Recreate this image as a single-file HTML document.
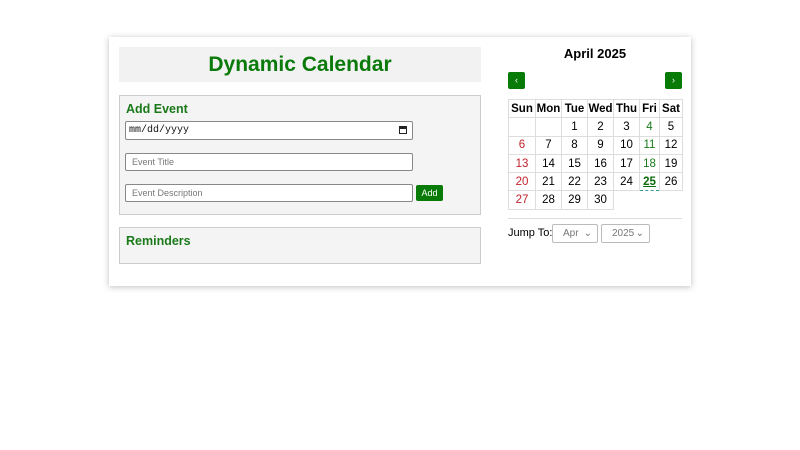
<!DOCTYPE html>
<html><head><style>
*{box-sizing:border-box;margin:0;padding:0}
body{width:800px;height:450px;background:#fff;font-family:"Liberation Sans",sans-serif;position:relative;overflow:hidden}
.abs{position:absolute}
.wrap{left:109px;top:37px;width:582px;height:249px;background:#fff;box-shadow:0 1px 6px rgba(0,0,0,.25)}
.tbox{left:119px;top:47px;width:362px;height:35px;background:#f2f2f2;color:#0a7a0a;font-weight:bold;font-size:21px;text-align:center;line-height:35px}
.box{left:119px;width:362px;background:#f4f4f4;border:1px solid #ccc}
h3{position:absolute;left:6px;font-size:12.5px;color:#1a7a1a}
.inp{position:absolute;left:125px;width:288px;background:#fff;border:1px solid #888;border-radius:2px;font-size:9px;color:#777;padding-left:6px}
.btn{background:#087a08;color:#fff;border-radius:2px;text-align:center}
table{position:absolute;left:508px;top:99px;width:174px;table-layout:fixed;border-collapse:collapse;font-size:11.5px}
td,th{border:1px solid #ddd;height:18.3px;text-align:center;padding:0}
th{font-weight:bold}
.r{color:#c0202a}.g{color:#1a7a1a}
.sel{left:552px;top:224px;height:19px;border:1px solid #bbb;border-radius:2px;font-size:10px;color:#777;line-height:17px;padding-left:10px;background:#fff}
</style></head><body>
<div class="abs wrap"></div>
<div class="abs tbox">Dynamic Calendar</div>
<div class="abs box" style="top:95px;height:120px"><h3 style="top:6px">Add Event</h3></div>
<div class="inp" style="top:121px;height:19px;font-family:'Liberation Mono',monospace;font-size:10px;color:#111;line-height:17px;padding-left:3px">mm/dd/yyyy<span style="position:absolute;right:5px;top:4px;width:8px;height:8px;border:1.5px solid #222;border-top-width:3px"></span></div>
<div class="inp" style="top:153px;height:18px;line-height:16px">Event Title</div>
<div class="inp" style="top:184px;height:18px;line-height:16px">Event Description</div>
<div class="abs btn" style="left:416px;top:185px;width:27px;height:16px;font-size:9px;line-height:16px">Add</div>
<div class="abs box" style="top:227px;height:37px"><h3 style="top:6px">Reminders</h3></div>
<div class="abs" style="left:508px;width:174px;top:46px;text-align:center;font-weight:bold;font-size:13px">April 2025</div>
<div class="abs btn" style="left:508px;top:72px;width:17px;height:17px;font-size:9px;line-height:17px">‹</div>
<div class="abs btn" style="left:665px;top:72px;width:17px;height:17px;font-size:9px;line-height:17px">›</div>
<table>
<colgroup><col style="width:27px"><col style="width:26px"><col style="width:26px"><col style="width:26px"><col style="width:26px"><col style="width:20px"><col style="width:23px"></colgroup>
<tr><th>Sun</th><th>Mon</th><th>Tue</th><th>Wed</th><th>Thu</th><th>Fri</th><th>Sat</th></tr>
<tr><td></td><td></td><td>1</td><td>2</td><td>3</td><td class="g">4</td><td>5</td></tr>
<tr><td class="r">6</td><td>7</td><td>8</td><td>9</td><td>10</td><td class="g">11</td><td>12</td></tr>
<tr><td class="r">13</td><td>14</td><td>15</td><td>16</td><td>17</td><td class="g">18</td><td>19</td></tr>
<tr><td class="r">20</td><td>21</td><td>22</td><td>23</td><td>24</td><td style="border:1px dashed #3a9a9a;color:#0a6a0a;font-weight:bold;text-decoration:underline">25</td><td>26</td></tr>
<tr><td class="r">27</td><td>28</td><td>29</td><td>30</td><td style="border:none"></td><td style="border:none"></td><td style="border:none"></td></tr>
</table>
<div class="abs" style="left:508px;top:218px;width:174px;border-top:1px solid #ddd"></div>
<div class="abs" style="left:508px;top:227px;font-size:11px;white-space:nowrap">Jump To:</div>
<div class="abs sel" style="width:46px">Apr<span style="position:absolute;right:5px">⌄</span></div>
<div class="abs sel" style="left:601px;width:49px">2025<span style="position:absolute;right:5px">⌄</span></div>
</body></html>
